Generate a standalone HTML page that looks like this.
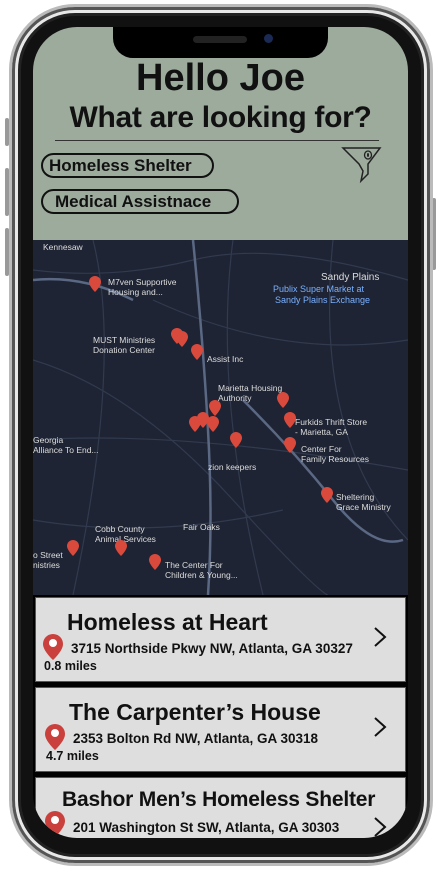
<!DOCTYPE html>
<html><head><meta charset="utf-8"><style>
*{margin:0;padding:0;box-sizing:border-box}
body{width:441px;height:872px;background:#fff;position:relative;overflow:hidden;font-family:"Liberation Sans",sans-serif}
.phone{position:absolute;left:9px;top:4px;width:424px;height:862px;border-radius:66px;background:#111;border:3px solid #bbb;box-shadow:inset 0 0 0 3px #555,inset 0 0 0 6px #e8e8e8,inset 0 0 0 9px #222}
.btn{position:absolute;background:#999;border-radius:2px;width:4px}
.screen{position:absolute;left:33px;top:27px;width:375px;height:811px;border-radius:44px;overflow:hidden;background:#000}
.hdr{position:absolute;left:0;top:0;width:375px;height:213px;background:#9dab9d}
.notch{position:absolute;left:80px;top:0;width:215px;height:31px;background:#000;border-radius:0 0 20px 20px}
h1{position:absolute;top:30px;width:100%;text-align:center;font-size:38px;font-weight:bold;color:#111}
h2{position:absolute;top:74px;left:0;width:100%;text-align:center;font-size:30px;font-weight:bold;color:#111;letter-spacing:-0.3px}
.line{position:absolute;left:22px;top:113px;width:324px;height:1px;background:#333}
.pill{position:absolute;left:8px;height:25px;border:2px solid #111;border-radius:13px;font-weight:bold;font-size:17px;color:#111;padding:1px 0 0 6px}
.map{position:absolute;left:0;top:213px;width:375px;height:355px;background:#1e2433}
.card{position:absolute;left:2px;width:371px;background:#dedede;border:1px solid #555}
.card .t{position:absolute;left:31px;font-weight:bold;font-size:23px;color:#111;white-space:nowrap}
.card .a{position:absolute;left:35px;font-weight:bold;font-size:13.5px;color:#111;white-space:nowrap}
.card .m{position:absolute;left:8px;font-weight:bold;font-size:12.5px;color:#111}
.card svg.chev{position:absolute;right:18px}
.card svg.pin{position:absolute;left:6px}
</style></head><body>
<div class="btn" style="left:5px;top:118px;height:28px"></div>
<div class="btn" style="left:5px;top:168px;height:48px"></div>
<div class="btn" style="left:5px;top:228px;height:48px"></div>
<div class="btn" style="left:432px;top:198px;height:72px"></div>
<div class="phone"></div>
<div class="screen">
<div class="hdr">
 <h1>Hello Joe</h1>
 <h2>What are looking for?</h2>
 <div class="line"></div>
 <div class="pill" style="top:126px;width:173px">Homeless Shelter</div>
 <div class="pill" style="top:162px;width:198px;padding-left:12px">Medical Assistnace</div>
 <svg style="position:absolute;left:308px;top:119px" width="42" height="38" viewBox="0 0 42 38"><path d="M2 2 H39 L27 18 V28 L20 35 L22 25 L18 18 Z" fill="none" stroke="#222" stroke-width="1.5"/><ellipse cx="27" cy="9" rx="3.5" ry="4" fill="none" stroke="#222" stroke-width="1.3"/><ellipse cx="27" cy="9" rx="1" ry="2" fill="#222"/></svg>
</div>
<div class="notch"><div style="position:absolute;left:80px;top:9px;width:54px;height:7px;border-radius:4px;background:#222"></div><div style="position:absolute;left:151px;top:7px;width:9px;height:9px;border-radius:50%;background:#1a2a55"></div></div>
<div class="map">
<svg width="375" height="355" viewBox="0 0 375 355" font-family="Liberation Sans" font-size="8.5" fill="#ddd">
<g stroke="#313a4e" stroke-width="1.2" fill="none">
<path d="M0 30 Q80 40 160 20 T375 40"/><path d="M60 0 Q90 120 40 355"/><path d="M200 0 Q180 150 230 355"/><path d="M0 200 Q150 190 375 230"/><path d="M120 60 Q250 120 375 100"/><path d="M0 120 Q100 150 200 260 T300 355"/><path d="M300 0 Q280 200 375 300"/><path d="M0 280 Q120 300 250 270"/>
</g>
<g stroke="#5a6884" stroke-width="2.5" fill="none"><path d="M210 160 Q260 210 300 260 T370 300"/><path d="M160 0 Q170 100 175 190 T175 355"/><path d="M0 40 Q50 35 100 60"/></g>
<text x="10" y="10">Kennesaw</text><text x="288" y="40" font-size="10">Sandy Plains</text>
<text x="240" y="52" fill="#7ab0ff" font-size="9">Publix Super Market at</text><text x="242" y="63" fill="#7ab0ff" font-size="9">Sandy Plains Exchange</text>
<text x="75" y="45">M7ven Supportive</text><text x="75" y="55">Housing and...</text>
<text x="60" y="103">MUST Ministries</text><text x="60" y="113">Donation Center</text><text x="174" y="122">Assist Inc</text>
<text x="185" y="151">Marietta Housing</text><text x="185" y="161">Authority</text>
<text x="262" y="185">Furkids Thrift Store</text><text x="262" y="195">- Marietta, GA</text>
<text x="268" y="212">Center For</text><text x="268" y="222">Family Resources</text>
<text x="0" y="203">Georgia</text><text x="0" y="213">Alliance To End...</text><text x="175" y="230">zion keepers</text>
<text x="303" y="260">Sheltering</text><text x="303" y="270">Grace Ministry</text><text x="150" y="290">Fair Oaks</text>
<text x="62" y="292">Cobb County</text><text x="62" y="302">Animal Services</text>
<text x="0" y="318">o Street</text><text x="0" y="328">nistries</text>
<text x="132" y="328">The Center For</text><text x="132" y="338">Children &amp; Young...</text>
<defs><path id="p" d="M0 0 a6 6 0 0 1 6 6 c0 4 -6 10 -6 10 c0 0 -6 -6 -6 -10 a6 6 0 0 1 6 -6z"/></defs>
<g fill="#d94a3c">
<use href="#p" x="62" y="36"/><use href="#p" x="144" y="88"/><use href="#p" x="149" y="91"/><use href="#p" x="164" y="104"/>
<use href="#p" x="182" y="160"/><use href="#p" x="180" y="176"/><use href="#p" x="162" y="176"/><use href="#p" x="170" y="172"/>
<use href="#p" x="203" y="192"/><use href="#p" x="250" y="152"/><use href="#p" x="257" y="172"/><use href="#p" x="257" y="197"/>
<use href="#p" x="294" y="247"/><use href="#p" x="40" y="300"/><use href="#p" x="88" y="300"/><use href="#p" x="122" y="314"/>
</g>
</svg>
</div>
<div class="card" style="top:570px;height:85px"><div class="t" style="top:11px">Homeless at Heart</div><div class="a" style="top:43px">3715 Northside Pkwy NW, Atlanta, GA 30327</div><div class="m" style="top:61px">0.8 miles</div>
<svg class="pin" style="top:35px" width="22" height="28" viewBox="0 0 22 28"><path d="M11 1a10 10 0 0 1 10 10c0 7-10 16-10 16S1 18 1 11A10 10 0 0 1 11 1z" fill="#c9403c"/><circle cx="11" cy="10" r="4" fill="#fff"/></svg>
<svg class="chev" style="top:28px" width="14" height="22"><path d="M2 2l10 9-10 9" fill="none" stroke="#111" stroke-width="2"/></svg></div>
<div class="card" style="top:660px;height:85px"><div class="t" style="top:11px;left:33px">The Carpenter’s House</div><div class="a" style="top:43px;left:37px">2353 Bolton Rd NW, Atlanta, GA 30318</div><div class="m" style="top:61px;left:10px">4.7 miles</div>
<svg class="pin" style="top:35px;left:8px" width="22" height="28" viewBox="0 0 22 28"><path d="M11 1a10 10 0 0 1 10 10c0 7-10 16-10 16S1 18 1 11A10 10 0 0 1 11 1z" fill="#c9403c"/><circle cx="11" cy="10" r="4" fill="#fff"/></svg>
<svg class="chev" style="top:28px" width="14" height="22"><path d="M2 2l10 9-10 9" fill="none" stroke="#111" stroke-width="2"/></svg></div>
<div class="card" style="top:750px;height:70px"><div class="t" style="top:10px;left:26px;font-size:21px;letter-spacing:-0.2px">Bashor Men’s Homeless Shelter</div><div class="a" style="top:42px;left:37px">201 Washington St SW, Atlanta, GA 30303</div>
<svg class="pin" style="top:32px;left:8px" width="22" height="28" viewBox="0 0 22 28"><path d="M11 1a10 10 0 0 1 10 10c0 7-10 16-10 16S1 18 1 11A10 10 0 0 1 11 1z" fill="#c9403c"/><circle cx="11" cy="10" r="4" fill="#fff"/></svg>
<svg class="chev" style="top:38px" width="14" height="22"><path d="M2 2l10 9-10 9" fill="none" stroke="#111" stroke-width="2"/></svg></div>
</div>
</body></html>
